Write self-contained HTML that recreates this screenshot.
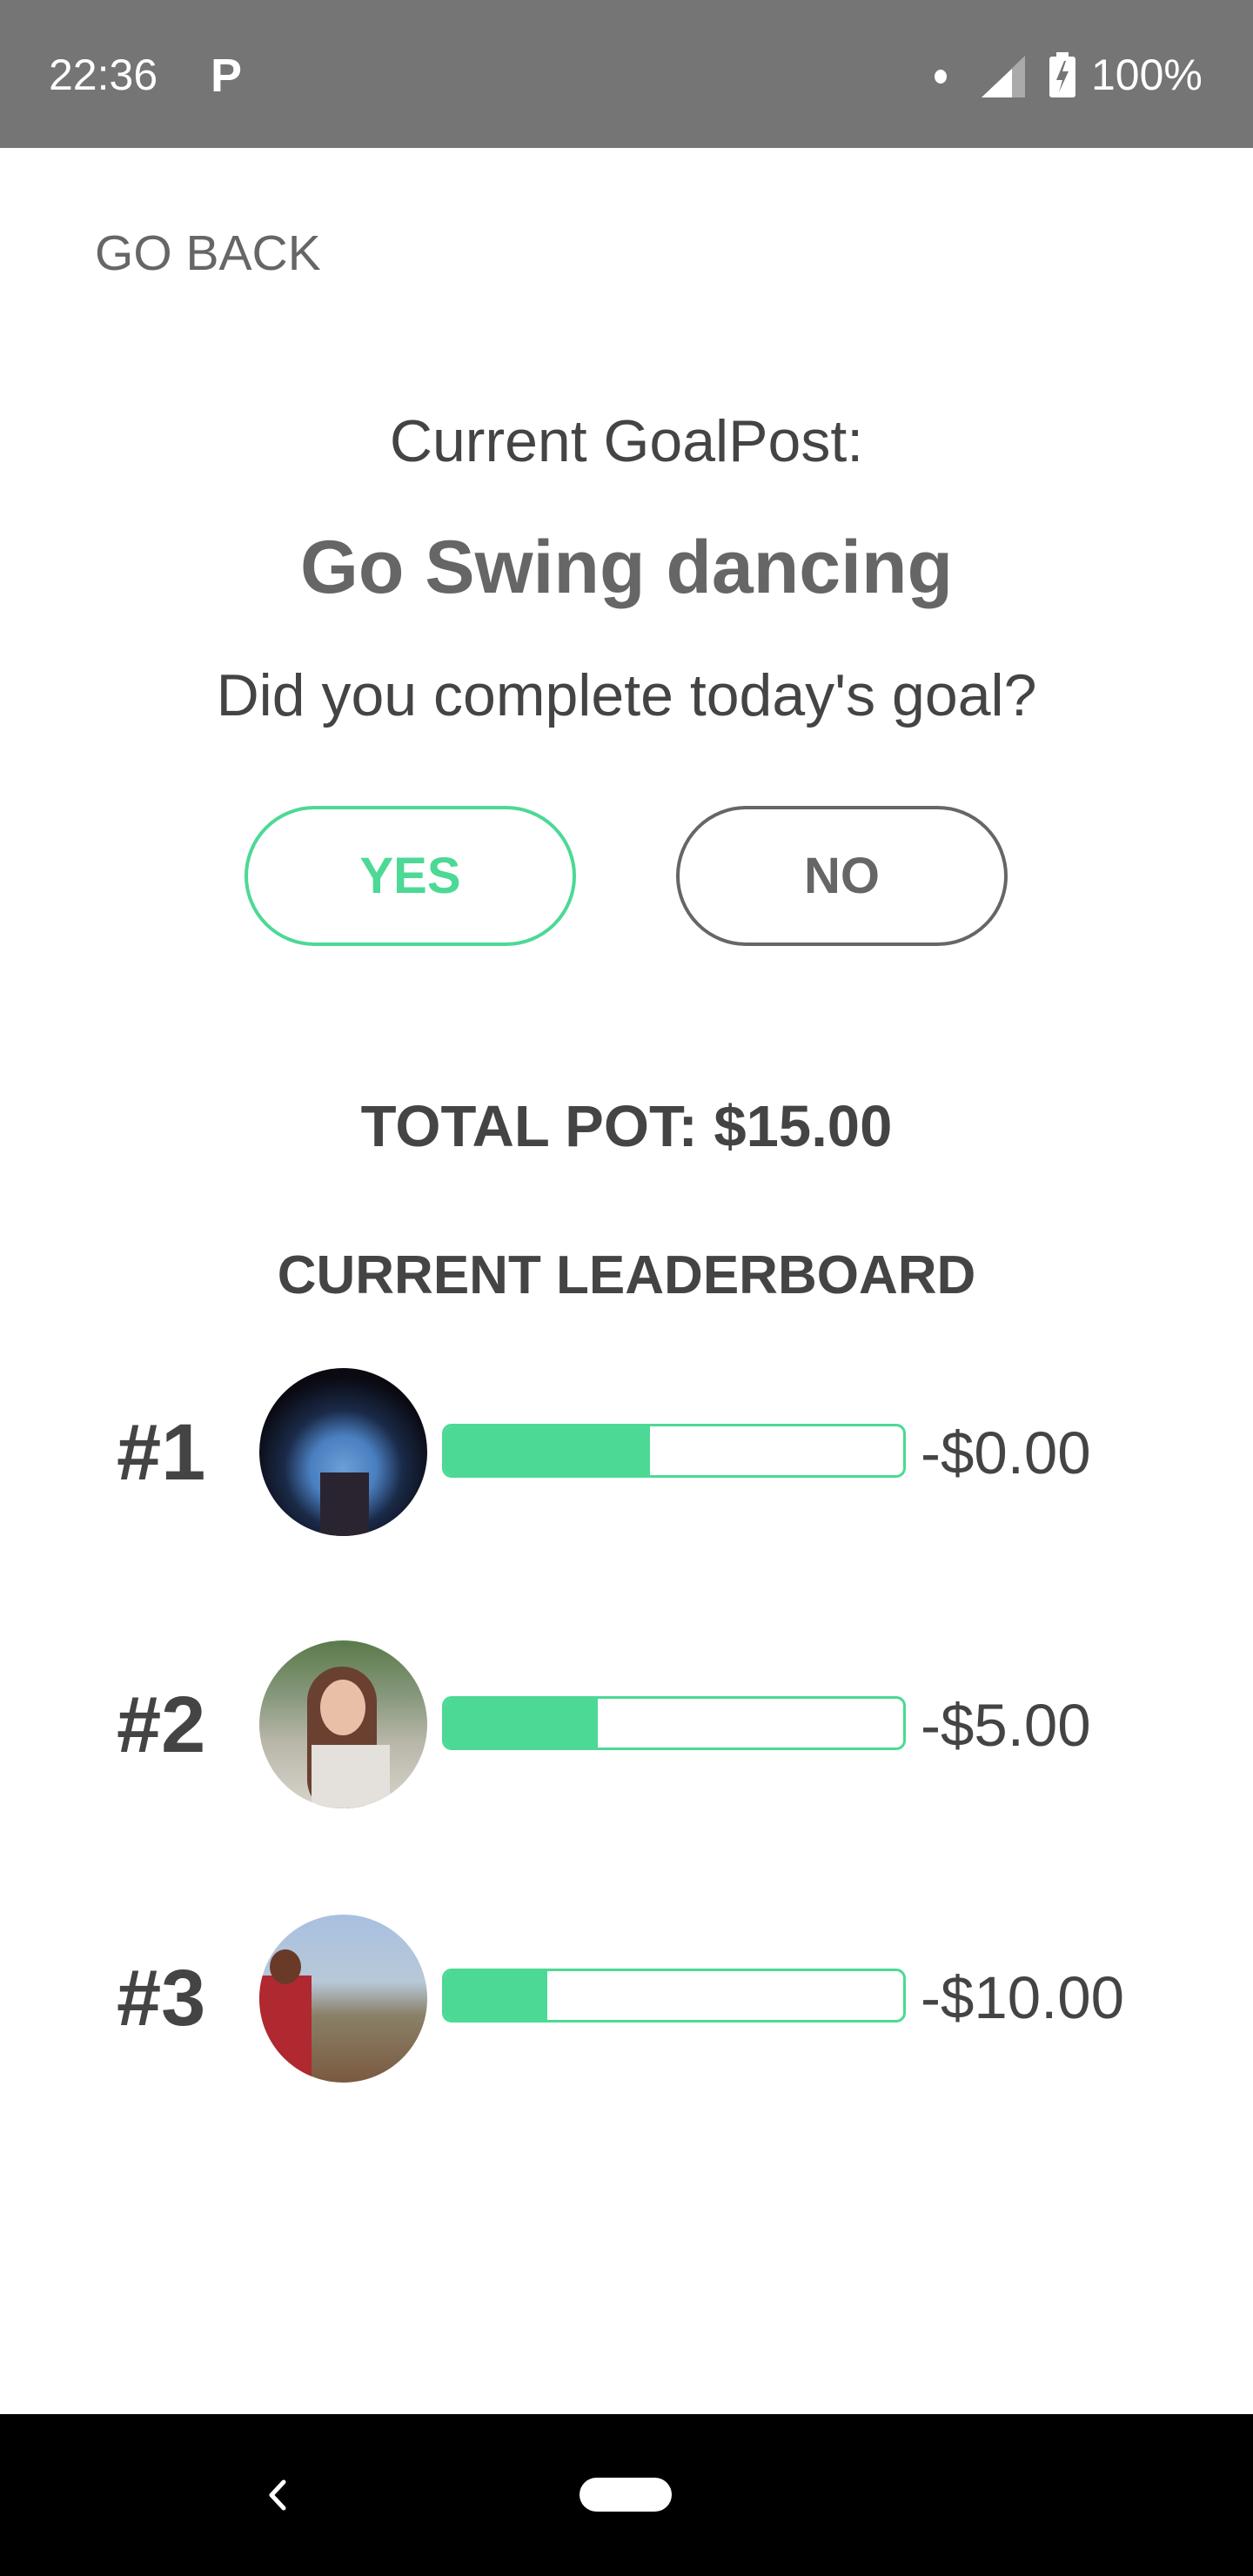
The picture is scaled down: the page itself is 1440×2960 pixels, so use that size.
<!DOCTYPE html>
<html><head><meta charset="utf-8"><style>
*{margin:0;padding:0;box-sizing:border-box}
body{width:1440px;height:2960px;background:#fff;position:relative;overflow:hidden;font-family:"Liberation Sans",Roboto,sans-serif}
.a{position:absolute;white-space:nowrap}
.c{left:0;width:1440px;text-align:center}
.btn{position:absolute;top:926px;width:381px;height:161px;border-radius:81px;border:4px solid;font-size:58px;font-weight:bold;display:flex;align-items:center;justify-content:center}
.rank{position:absolute;left:134px;font-size:92px;font-weight:bold;color:#444}
.av{position:absolute;left:298px;width:193px;height:193px;border-radius:50%;overflow:hidden}
.bar{position:absolute;left:508px;width:533px;height:62px;border:3px solid #4cd995;border-radius:11px;overflow:hidden;background:#fff}
.bar i{display:block;height:100%;background:#4cd995}
.amt{position:absolute;left:1058px;font-size:69px;color:#444}
</style></head><body>
<div class="a" style="left:0;top:0;width:1440px;height:170px;background:#757575"></div>
<div class="a" style="left:56px;top:57px;font-size:50px;color:#fff">22:36</div>
<div class="a" style="left:242px;top:56px;font-size:54px;font-weight:bold;color:#fff">P</div>
<div class="a" style="left:1074px;top:80px;width:14px;height:16px;border-radius:50%;background:#fff"></div>
<svg class="a" style="left:1128px;top:64px" width="50" height="48"><polygon points="50,0 50,48 0,48" fill="#aaa"/><polygon points="35,15 35,48 0,48" fill="#fff"/></svg>
<svg class="a" style="left:1206px;top:60px" width="30" height="52"><rect x="8" y="0" width="14" height="6" fill="#fff"/><rect x="0" y="5" width="30" height="47" rx="3" fill="#fff"/><polygon points="17,10 8,32 15,32 11,46 22,22 15,22 19,10" fill="#757575"/></svg>
<div class="a" style="left:1254px;top:57px;font-size:50px;color:#fff">100%</div>

<div class="a" style="left:109px;top:258px;font-size:57px;color:#666">GO BACK</div>
<div class="a c" style="top:468px;font-size:68px;color:#444">Current GoalPost:</div>
<div class="a c" style="top:603px;font-size:86px;font-weight:bold;color:#666">Go Swing dancing</div>
<div class="a c" style="top:760px;font-size:68px;color:#444">Did you complete today's goal?</div>
<div class="btn" style="left:281px;border-color:#4cd995;color:#4cd995">YES</div>
<div class="btn" style="left:777px;border-color:#666;color:#666">NO</div>
<div class="a c" style="top:1256px;font-size:67px;font-weight:bold;color:#444">TOTAL POT: $15.00</div>
<div class="a c" style="top:1430px;font-size:62px;font-weight:bold;color:#444">CURRENT LEADERBOARD</div>

<div class="rank" style="top:1617px">#1</div>
<div class="av" style="top:1572px;background:radial-gradient(circle at 50% 60%,#6a9fd8 0,#4a7fc0 25%,#1a2a48 45%,#0a0a12 70%)"><div style="position:absolute;left:70px;top:120px;width:56px;height:73px;background:#2a2430"></div></div>
<div class="bar" style="top:1636px"><i style="width:236px"></i></div>
<div class="amt" style="top:1630px">-$0.00</div>

<div class="rank" style="top:1930px">#2</div>
<div class="av" style="top:1885px;background:linear-gradient(180deg,#5a7a4a 0,#8a9a80 35%,#b8b6a8 60%,#d8d4cc 100%)"><div style="position:absolute;left:55px;top:30px;width:80px;height:170px;border-radius:40px;background:#6a4030"></div><div style="position:absolute;left:70px;top:45px;width:52px;height:64px;border-radius:50%;background:#e8c0a8"></div><div style="position:absolute;left:60px;top:120px;width:90px;height:80px;background:#e4e0dc"></div></div>
<div class="bar" style="top:1949px"><i style="width:176px"></i></div>
<div class="amt" style="top:1943px">-$5.00</div>

<div class="rank" style="top:2244px">#3</div>
<div class="av" style="top:2200px;background:linear-gradient(180deg,#a8c0e0 0,#b8c8d8 40%,#8a8068 60%,#7a5a40 100%)"><div style="position:absolute;left:0;top:70px;width:60px;height:123px;background:#b02830"></div><div style="position:absolute;left:12px;top:40px;width:36px;height:40px;border-radius:50%;background:#6a3a28"></div></div>
<div class="bar" style="top:2262px"><i style="width:118px"></i></div>
<div class="amt" style="top:2256px">-$10.00</div>

<div class="a" style="left:0;top:2774px;width:1440px;height:186px;background:#000"></div>
<svg class="a" style="left:300px;top:2846px" width="36" height="42"><polyline points="26,6 12,21 26,36" fill="none" stroke="#fff" stroke-width="5" stroke-linecap="round" stroke-linejoin="round"/></svg>
<div class="a" style="left:666px;top:2847px;width:106px;height:39px;border-radius:20px;background:#fff"></div>
</body></html>
